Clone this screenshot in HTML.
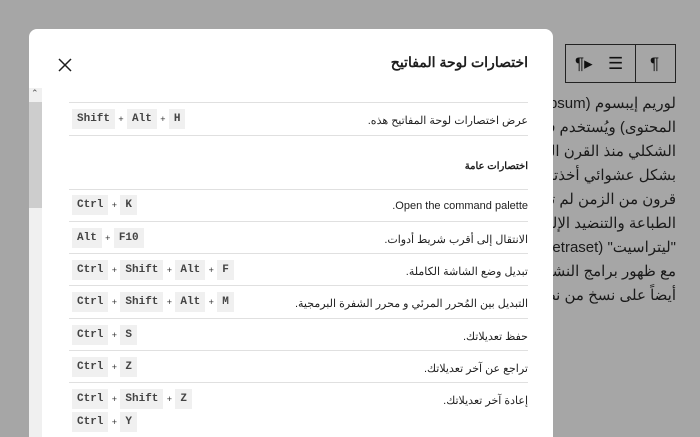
<!DOCTYPE html>
<html><head><meta charset="utf-8"><style>
*{margin:0;padding:0;box-sizing:border-box}
html{overflow:hidden;height:437px}
body{width:700px;height:437px;overflow:hidden;background:#a6a6a6;position:relative;font-family:"Liberation Sans","Noto Sans CJK SC",sans-serif}
.bgtext{position:absolute;left:300px;width:376px;top:92px;direction:rtl;text-align:right;font-size:15px;line-height:24px;color:#1a1a1a;white-space:nowrap}
.tb{position:absolute;left:565px;top:44px;width:111px;height:39px;border:1px solid #222;}
.tb .d{position:absolute;left:69px;top:0;bottom:0;border-left:1px solid #222}
.tb span{position:absolute;top:9px;font-size:17px;color:#111}
.modal{position:absolute;left:29px;top:29px;width:524px;height:408px;background:#fff;border-radius:8px 8px 0 0}
.title{position:absolute;right:172px;top:54px;font-size:14px;font-weight:bold;direction:rtl;color:#1e1e1e}
.close{position:absolute;left:57px;top:57px}
.track{position:absolute;left:29px;top:88px;width:13px;height:349px;background:#f0f0f0}
.thumb{position:absolute;left:29px;top:102px;width:13px;height:106px;background:#cdcdcd}
.arrow{position:absolute;left:31px;top:88px;font-size:9px;color:#555}
.sep{position:absolute;left:69px;width:459px;height:1px;background:#e0e0e0}
.row{position:absolute;left:72px;width:456px;height:20px}
.lbl{position:absolute;right:0;top:5px;font-size:11px;color:#1e1e1e;direction:rtl;white-space:nowrap}
.keys{position:absolute;left:0;top:0;display:flex;align-items:center;height:20px}
.k{background:#f0f0f0;height:20px;line-height:20px;padding:0 5px;font-family:"Liberation Mono",monospace;font-size:11px;font-weight:bold;color:#444}
.p{font-size:9px;color:#333;width:12px;text-align:center}
.sec{position:absolute;right:172px;top:161px;font-size:10px;font-weight:bold;direction:rtl;color:#1e1e1e}
</style></head><body>
<div class="bgtext">لوريم إيبسوم (Lorem Ipsum) هو ببساطة نص<br>المحتوى) ويُستخدم في صناعات المطابع ودور النشر<br>الشكلي منذ القرن الخامس عشر عندما قامت مطبعة<br>بشكل عشوائي أخذتها من نص، لتكوّن كتيّب بمثابة<br>قرون من الزمن لم تقضي على هذا النص، بل انه حتى<br>الطباعة والتنضيد الإلكتروني. انتشر بشكل كبير في<br>"ليتراسيت" (Letraset) البلاستيكية تحوي مقاطع<br>مع ظهور برامج النشر الإلكتروني مثل "ألدوس بايج<br>أيضاً على نسخ من نص لوريم إيبسوم.</div>
<div class="tb"><div class="d"></div><span style="left:9px">¶▸</span><span style="left:42px">☰</span><span style="left:84px">¶</span></div>
<div class="modal"></div>
<div class="title">اختصارات لوحة المفاتيح</div>
<svg class="close" width="16" height="16" viewBox="0 0 16 16"><path d="M2 2L14 14M14 2L2 14" stroke="#1e1e1e" stroke-width="1.5"/></svg>
<div class="track"></div><div class="thumb"></div><div class="arrow">⌃</div>
<div class="sep" style="top:102px"></div>
<div class="row" style="top:109px"><div class="keys"><span class="k">Shift</span><span class="p">+</span><span class="k">Alt</span><span class="p">+</span><span class="k">H</span></div><div class="lbl">عرض اختصارات لوحة المفاتيح هذه.</div></div>
<div class="sep" style="top:135px"></div>
<div class="sec">اختصارات عامة</div>
<div class="sep" style="top:189px"></div>
<div class="row" style="top:195px"><div class="keys"><span class="k">Ctrl</span><span class="p">+</span><span class="k">K</span></div><div class="lbl">Open the command palette.</div></div>
<div class="sep" style="top:221px"></div>
<div class="row" style="top:228px"><div class="keys"><span class="k">Alt</span><span class="p">+</span><span class="k">F10</span></div><div class="lbl">الانتقال إلى أقرب شريط أدوات.</div></div>
<div class="sep" style="top:253px"></div>
<div class="row" style="top:260px"><div class="keys"><span class="k">Ctrl</span><span class="p">+</span><span class="k">Shift</span><span class="p">+</span><span class="k">Alt</span><span class="p">+</span><span class="k">F</span></div><div class="lbl">تبديل وضع الشاشة الكاملة.</div></div>
<div class="sep" style="top:285px"></div>
<div class="row" style="top:292px"><div class="keys"><span class="k">Ctrl</span><span class="p">+</span><span class="k">Shift</span><span class="p">+</span><span class="k">Alt</span><span class="p">+</span><span class="k">M</span></div><div class="lbl">التبديل بين المُحرر المرئي و محرر الشفرة البرمجية.</div></div>
<div class="sep" style="top:318px"></div>
<div class="row" style="top:325px"><div class="keys"><span class="k">Ctrl</span><span class="p">+</span><span class="k">S</span></div><div class="lbl">حفظ تعديلاتك.</div></div>
<div class="sep" style="top:350px"></div>
<div class="row" style="top:357px"><div class="keys"><span class="k">Ctrl</span><span class="p">+</span><span class="k">Z</span></div><div class="lbl">تراجع عن آخر تعديلاتك.</div></div>
<div class="sep" style="top:382px"></div>
<div class="row" style="top:389px"><div class="keys"><span class="k">Ctrl</span><span class="p">+</span><span class="k">Shift</span><span class="p">+</span><span class="k">Z</span></div><div class="lbl">إعادة آخر تعديلاتك.</div></div>
<div class="row" style="top:412px"><div class="keys"><span class="k">Ctrl</span><span class="p">+</span><span class="k">Y</span></div></div>
</body></html>
